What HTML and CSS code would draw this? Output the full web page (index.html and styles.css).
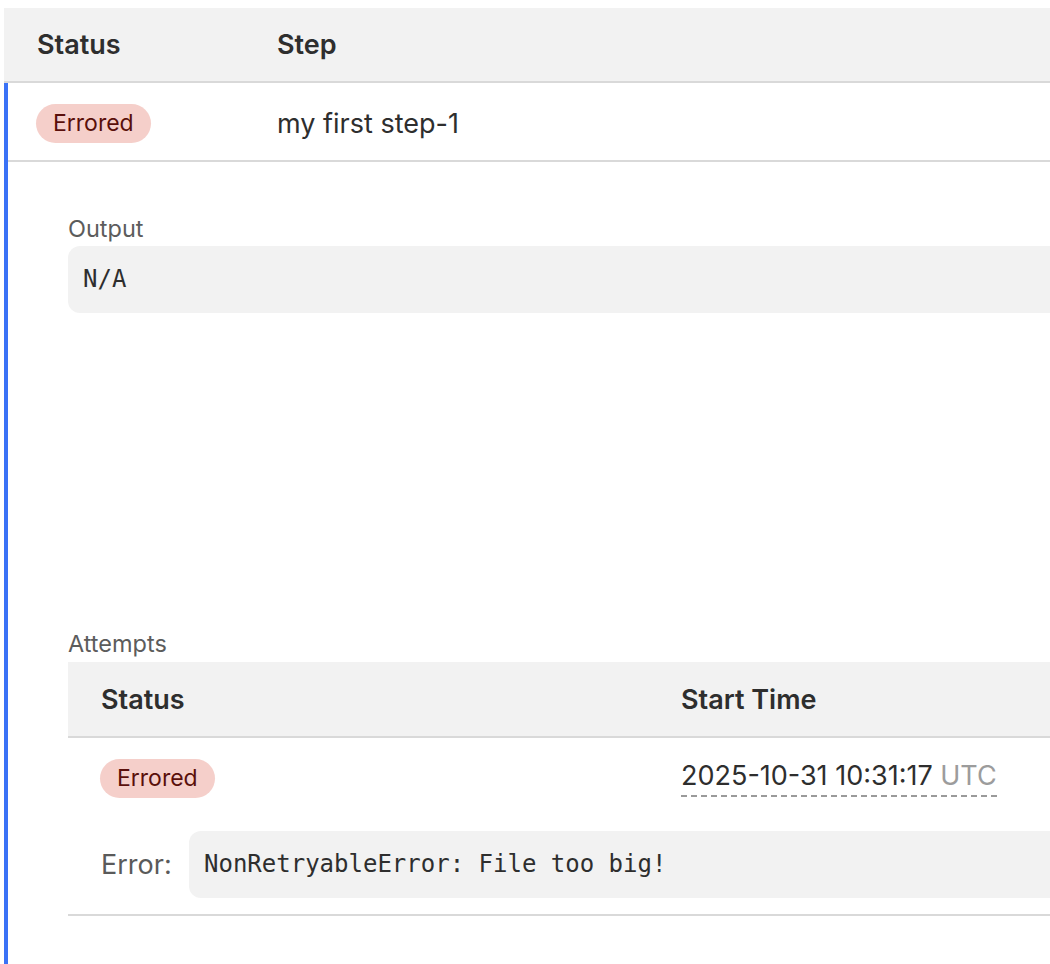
FILE: index.html
```html
<!DOCTYPE html>
<html>
<head>
<meta charset="utf-8">
<link rel="stylesheet" href="styles.css">
</head>
<body>
<div class="page">
  <div class="thead">
    <div class="col-status">Status</div>
    <div class="col-step">Step</div>
  </div>
  <div class="expanded">
    <div class="row">
      <div class="col-status"><span class="badge">Errored</span></div>
      <div class="col-step">my first step-1</div>
    </div>
    <div class="detail">
      <div class="label">Output</div>
      <div class="codebox output">N/A</div>
      <div class="label attempts-label">Attempts</div>
      <div class="attempts">
        <div class="a-head">
          <div class="a-status">Status</div>
          <div class="a-time">Start Time</div>
        </div>
        <div class="a-row">
          <div class="a-main">
            <div class="a-status"><span class="badge">Errored</span></div>
            <div class="a-time"><span class="ts">2025-10-31 10:31:17 <span class="tz">UTC</span></span></div>
          </div>
          <div class="a-error">
            <div class="err-label">Error:</div>
            <div class="codebox err-box">NonRetryableError: File too big!</div>
          </div>
        </div>
      </div>
    </div>
  </div>
</div>
</body>
</html>
```
FILE: styles.css
```css
html, body {
  margin: 0;
  padding: 0;
  background: #ffffff;
  overflow: hidden;
}
body {
  font-family: Inter, "Noto Sans", sans-serif;
  color: #2e2e2e;
  width: 1050px;
  height: 964px;
}
.page {
  padding: 8px 0 0 4px;
  width: 1200px;
}
.thead {
  display: flex;
  align-items: center;
  height: 73px;
  background: #f2f2f2;
  border-bottom: 2px solid #d9d9d9;
  font-weight: 600;
  font-size: 27px;
}
.col-status {
  width: 273px;
  padding-left: 33px;
  box-sizing: border-box;
  flex: none;
}
.col-step {
  flex: 1;
}
.expanded {
  border-left: 4px solid #3a72f6;
  height: 900px;
}
.expanded .col-status {
  width: 269px;
  padding-left: 28px;
}
.row {
  display: flex;
  align-items: center;
  height: 79px;
  box-sizing: border-box;
  padding-top: 4px;
  border-bottom: 2px solid #d9d9d9;
  font-size: 27px;
}
.badge {
  display: inline-block;
  background: #f5cfca;
  color: #5a0f0b;
  font-size: 23px;
  line-height: 39px;
  height: 39px;
  padding: 0 17px;
  border-radius: 20px;
  font-weight: 400;
}
.detail {
  padding: 53px 0 0 60px;
}
.label {
  font-size: 23.5px;
  color: #5c5c5c;
  line-height: 28px;
}
.codebox {
  background: #f2f2f2;
  border-radius: 12px;
  font-family: "DejaVu Sans Mono", monospace;
  font-size: 24px;
  color: #2e2e2e;
}
.output {
  margin-top: 3px;
  height: 67px;
  line-height: 67px;
  padding-left: 15px;
}
.attempts-label {
  margin-top: 317px;
}
.attempts {
  margin-top: 4px;
}
.a-head {
  display: flex;
  align-items: center;
  height: 74px;
  background: #f2f2f2;
  border-bottom: 2px solid #d9d9d9;
  font-weight: 600;
  font-size: 27px;
}
.a-status {
  width: 613px;
  padding-left: 33px;
  box-sizing: border-box;
  flex: none;
}
.a-time {
  flex: 1;
  font-size: 27px;
}
.a-row {
  border-bottom: 2px solid #d9d9d9;
  padding-bottom: 16px;
}
.a-main {
  display: flex;
  align-items: center;
  height: 80px;
}
.a-row .a-status {
  padding-left: 32px;
}
.ts {
  display: inline-block;
  padding-bottom: 5px;
  background-image: linear-gradient(to right, #9a9a9a 0 6px, transparent 6px 10px);
  background-size: 10px 2px;
  background-repeat: repeat-x;
  background-position: left bottom;
}
.tz {
  color: #9c9c9c;
}
.a-error {
  display: flex;
  align-items: center;
  margin-top: 13px;
  padding-left: 33px;
}
.err-label {
  font-size: 27px;
  color: #5a5a5a;
  width: 88px;
  flex: none;
}
.err-box {
  flex: 1;
  height: 67px;
  line-height: 67px;
  padding-left: 15px;
}
```
